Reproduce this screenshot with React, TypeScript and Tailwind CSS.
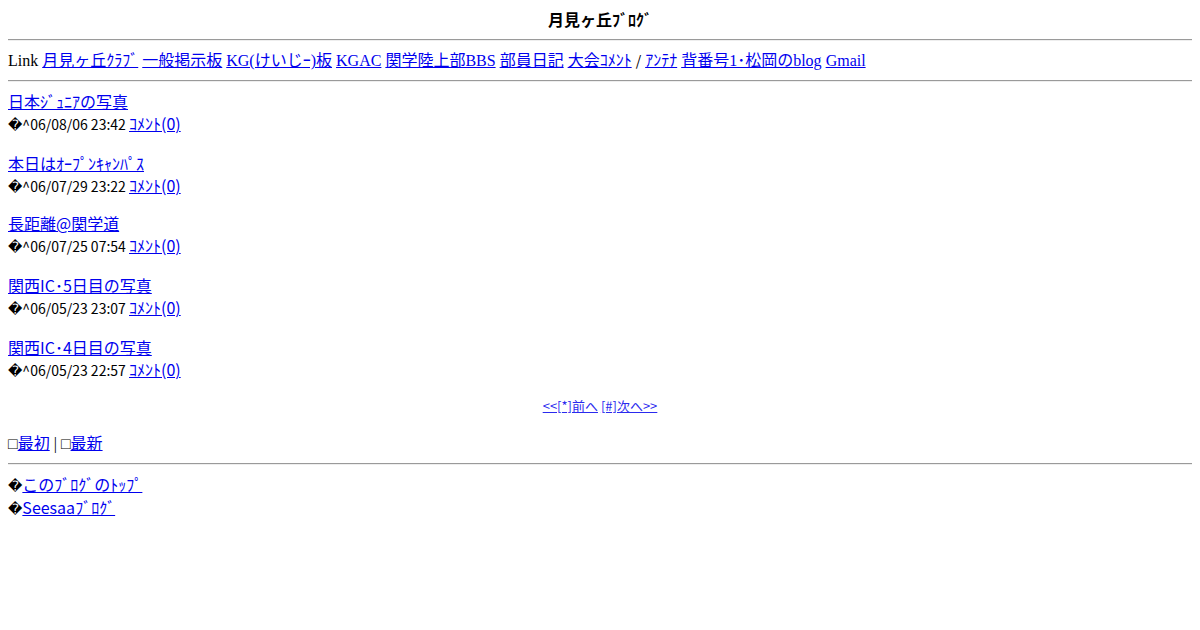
import React from "react";

const serif = "font-['Liberation_Serif','Noto_Sans_CJK_JP',serif]";
const sans = "font-['Noto_Sans_CJK_JP','DejaVu_Sans',sans-serif]";

function A({ children, className = "" }: { children: React.ReactNode; className?: string }) {
  return (
    <a href="#" className={`text-[#0000ee] underline ${className}`}>
      {children}
    </a>
  );
}

function Hr({ className = "my-2" }: { className?: string }) {
  return <div className={`${className} h-0 border-t border-t-[#9a9a9a] border-b border-b-[#eeeeee]`} />;
}

const posts = [
  { title: "日本ｼﾞｭﾆｱの写真", date: "06/08/06 23:42", mt: "mt-0" },
  { title: "本日はｵｰﾌﾟﾝｷｬﾝﾊﾟｽ", date: "06/07/29 23:22", mt: "mt-4" },
  { title: "長距離@関学道", date: "06/07/25 07:54", mt: "mt-[14px]" },
  { title: "関西IC･5日目の写真", date: "06/05/23 23:07", mt: "mt-4" },
  { title: "関西IC･4日目の写真", date: "06/05/23 22:57", mt: "mt-4" },
];

export default function App() {
  return (
    <div className={`p-2 text-base text-black bg-white min-h-[630px] ${serif}`}>
      <div className={`text-center font-bold leading-[23px] h-[23px] ${sans}`}>月見ヶ丘ﾌﾞﾛｸﾞ</div>
      <Hr />
      <div className="leading-[21px] h-[23px] whitespace-nowrap">
        Link <A>月見ヶ丘ｸﾗﾌﾞ</A> <A>一般掲示板</A> <A>KG(けいじｰ)板</A> <A>KGAC</A>{" "}
        <A>関学陸上部BBS</A> <A>部員日記</A> <A className={sans}>大会ｺﾒﾝﾄ</A>{" "}
        <span className={`text-[14px] ${sans}`}>/</span> <A className={sans}>ｱﾝﾃﾅ</A>{" "}
        <A>背番号1･松岡のblog</A> <A>Gmail</A>
      </div>
      <Hr />
      {posts.map((p, i) => (
        <div key={i} className={`${p.mt} ${sans}`}>
          <div className="leading-[23px] h-[23px]">
            <A>{p.title}</A>
          </div>
          <div className="leading-[21px] h-[23px] whitespace-nowrap">
            <span className="text-[14px]">�^{p.date} </span>
            <A>ｺﾒﾝﾄ(0)</A>
          </div>
        </div>
      ))}
      <div className={`mt-[14px] h-[20px] text-center text-[13px] leading-[20px] ${sans}`}>
        <A className="text-[#2a2aee]">&lt;&lt;[*]前へ</A> <A className="text-[#2a2aee]">[#]次へ&gt;&gt;</A>
      </div>
      <div className="mt-4 h-[23px] leading-[23px]">
        □<A>最初</A> | □<A>最新</A>
      </div>
      <Hr />
      <div className={sans}>
        <div className="leading-[23px] h-[23px]">
          <span className="text-[14px]">�</span>
          <A>このﾌﾞﾛｸﾞのﾄｯﾌﾟ</A>
        </div>
        <div className="leading-[23px] h-[23px]">
          <span className="text-[14px]">�</span>
          <A>Seesaaﾌﾞﾛｸﾞ</A>
        </div>
      </div>
    </div>
  );
}
